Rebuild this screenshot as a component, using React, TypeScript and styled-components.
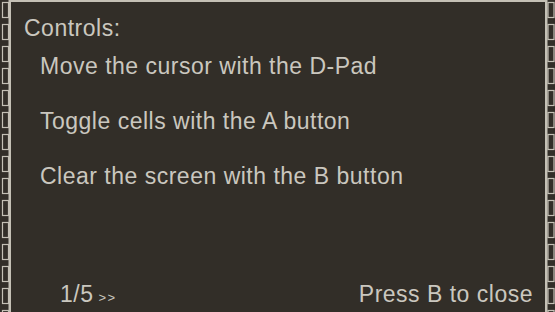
import React from "react";
import styled, { createGlobalStyle } from "styled-components";

const GlobalStyle = createGlobalStyle`
    html, body {
        margin: 0;
        padding: 0;
        background: #322e28;
    }
`;

const lines = [
    "Move the cursor with the D-Pad",
    "Toggle cells with the A button",
    "Clear the screen with the B button",
];

const Rail = ({ side }: { side: "left" | "right" }) => {
    const id = `chain-${side}`;
    const left = side === "left";
    return (
        <RailSvg width={left ? 11 : 10} height="312">
            <defs>
                <pattern id={id} width={left ? 11 : 10} height="22" patternUnits="userSpaceOnUse" y="-2">
                    <rect
                        x={left ? 2.5 : 3}
                        y="4.5"
                        width="6"
                        height="15"
                        fill="none"
                        stroke="#c4c0b5"
                        strokeWidth="1.2"
                    />
                </pattern>
            </defs>
            <rect x="0" y="0" width="100%" height="312" fill={`url(#${id})`} />
            <rect x={left ? 8.5 : 0} y="0" width="2.5" height="312" fill="#c4c0b5" />
        </RailSvg>
    );
};

const App = () => {
    return (
        <>
            <GlobalStyle />
            <Frame>
                <Rail side="left" />
                <Panel>
                    <Title>Controls:</Title>
                    <List>
                        {lines.map((line) => (
                            <Item key={line}>{line}</Item>
                        ))}
                    </List>
                    <Footer>
                        <Pager>
                            1/5<Arrows>&gt;&gt;</Arrows>
                        </Pager>
                        <Hint>Press B to close</Hint>
                    </Footer>
                </Panel>
                <Rail side="right" />
            </Frame>
        </>
    );
};

const Frame = styled.div`
    display: flex;
    width: 555px;
    height: 312px;
    overflow: hidden;
    background: #322e28;
    color: #cac7bf;
    font-family: "Liberation Sans", Arial, sans-serif;
    font-size: 23px;
    line-height: 24px;
    letter-spacing: 0.5px;
`;

const RailSvg = styled.svg`
    flex: none;
    display: block;
`;

const Panel = styled.div`
    flex: 1;
    display: flex;
    flex-direction: column;
    border-top: 2px solid #c4c0b5;
    padding: 14px 0 0 13px;
    min-width: 0;
`;

const Title = styled.div``;

const List = styled.div`
    display: flex;
    flex-direction: column;
    gap: 31px;
    padding: 14px 0 0 16px;
`;

const Item = styled.div``;

const Footer = styled.div`
    margin-top: auto;
    display: flex;
    justify-content: space-between;
    align-items: baseline;
    padding: 0 12px 2px 36px;
`;

const Pager = styled.div``;

const Arrows = styled.span`
    font-size: 13px;
    letter-spacing: 1.5px;
    margin-left: 5px;
`;

const Hint = styled.div``;

export default App;
